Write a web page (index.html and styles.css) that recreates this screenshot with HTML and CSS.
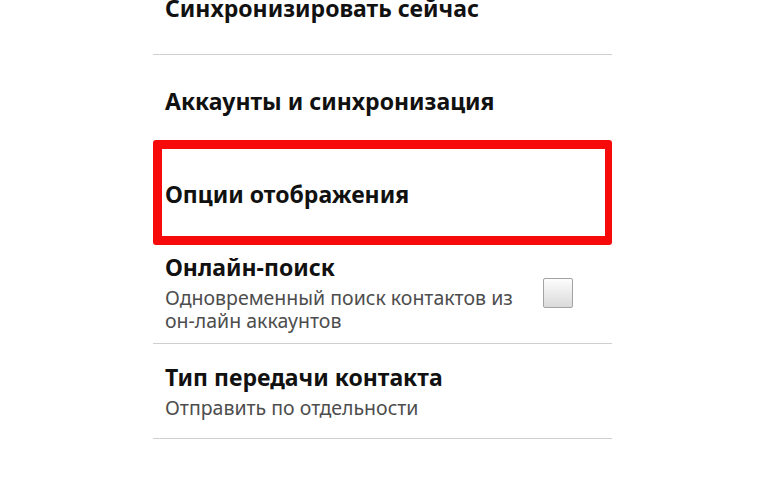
FILE: index.html
```html
<!DOCTYPE HTML>
<html>

<head>
    <meta charset="UTF-8">
    <title>Контакты - настройки</title>
    <meta name="viewport" content="width=device-width, initial-scale=1">
    <link rel="stylesheet" href="styles.css">
</head>

<body>
    <div class="list">
        <div class="item">
            <div class="text">
                <p class="title">Синхронизировать сейчас</p>
            </div>
        </div>
        <div class="item">
            <div class="text">
                <p class="title">Аккаунты и синхронизация</p>
            </div>
        </div>
        <div class="item marked">
            <div class="text">
                <p class="title">Опции отображения</p>
            </div>
            <div class="mark"></div>
        </div>
        <div class="item tall">
            <div class="text">
                <p class="title">Онлайн-поиск</p>
                <p class="sub">Одновременный поиск контактов из<br>он-лайн аккаунтов</p>
            </div>
            <span class="check"></span>
        </div>
        <div class="item last">
            <div class="text">
                <p class="title">Тип передачи контакта</p>
                <p class="sub">Отправить по отдельности</p>
            </div>
        </div>
    </div>
</body>

</html>
```

FILE: styles.css
```css
html {
    font-family: "Noto Sans", "DejaVu Sans", sans-serif;
}

body {
    margin: 0;
    background: #fff;
}

.list {
    width: 459px;
    margin: -38px 0 0 153px;
}

.item {
    display: flex;
    align-items: center;
    min-height: 92px;
    padding: 0 39px 0 12px;
    border-bottom: 1px solid #cfcfcf;
}

.item.tall {
    min-height: 0;
    padding-top: 12px;
    padding-bottom: 11px;
}

.item.last {
    min-height: 94px;
}

.marked {
    position: relative;
}

.text {
    flex: 1;
}

.title {
    margin: 0;
    font-size: 23px;
    line-height: 28px;
    font-weight: bold;
    color: #111;
}

.sub {
    margin: 5px 0 0;
    font-size: 19.5px;
    line-height: 23px;
    color: #4d4d4d;
}

.check {
    width: 28px;
    height: 28px;
    border: 1px solid #a3a3a3;
    border-radius: 2px;
    background: linear-gradient(#fdfdfd, #dadada);
}

/* red frame drawn over "Опции отображения" */
.mark {
    position: absolute;
    left: 0;
    right: 0;
    top: -8px;
    bottom: -5px;
    border: 9px solid #f70a0a;
    border-right-width: 7px;
    border-radius: 3px;
}
```
